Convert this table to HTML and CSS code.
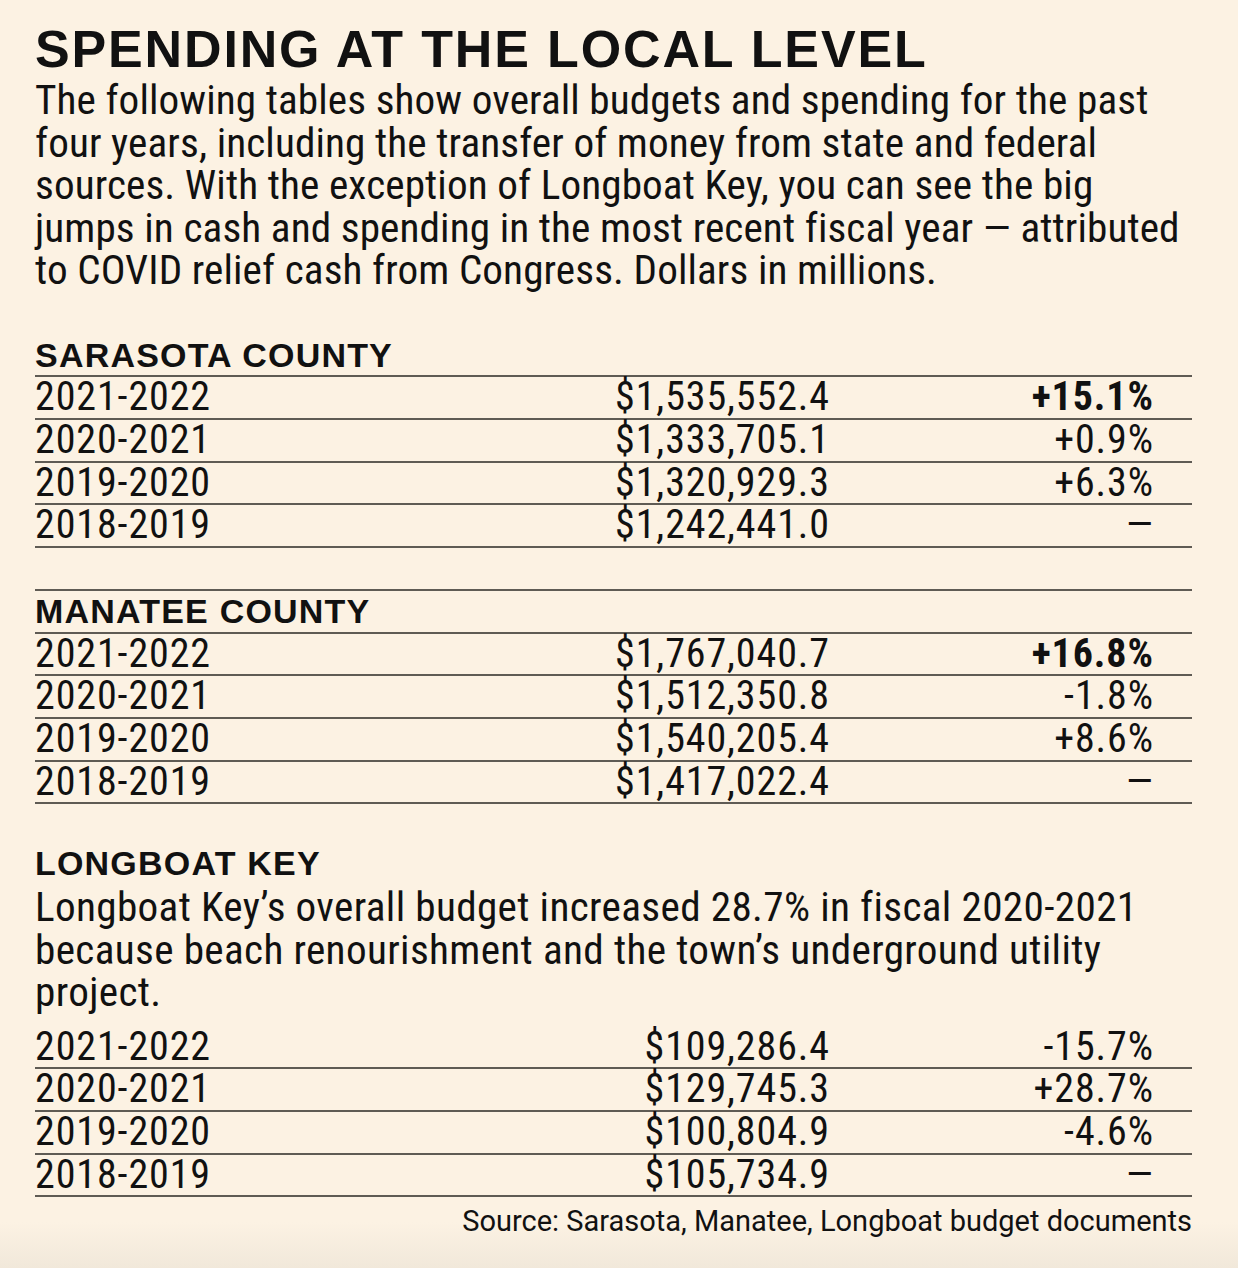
FILE: index.html
```html
<!DOCTYPE html>
<html lang="en">
<head>
<meta charset="utf-8">
<title>Spending at the local level</title>
<link rel="stylesheet" href="styles.css">
</head>
<body>
<main class="page">
  <h1 class="title">SPENDING AT THE LOCAL LEVEL</h1>
  <p class="intro">The following tables show overall budgets and spending for the past<br>four years, including the transfer of money from state and federal<br>sources. With the exception of Longboat Key, you can see the big<br>jumps in cash and spending in the most recent fiscal year — attributed<br>to COVID relief cash from Congress. Dollars in millions.</p>

  <section class="block block-first">
    <h2 class="sec-head ruled">SARASOTA COUNTY</h2>
    <div class="row"><span>2021-2022</span><span class="num">$1,535,552.4</span><span class="pct strong">+15.1%</span></div>
    <div class="row"><span>2020-2021</span><span class="num">$1,333,705.1</span><span class="pct">+0.9%</span></div>
    <div class="row"><span>2019-2020</span><span class="num">$1,320,929.3</span><span class="pct">+6.3%</span></div>
    <div class="row"><span>2018-2019</span><span class="num">$1,242,441.0</span><span class="pct">—</span></div>
  </section>

  <section class="block block-topline">
    <h2 class="sec-head ruled">MANATEE COUNTY</h2>
    <div class="row"><span>2021-2022</span><span class="num">$1,767,040.7</span><span class="pct strong">+16.8%</span></div>
    <div class="row"><span>2020-2021</span><span class="num">$1,512,350.8</span><span class="pct">-1.8%</span></div>
    <div class="row"><span>2019-2020</span><span class="num">$1,540,205.4</span><span class="pct">+8.6%</span></div>
    <div class="row"><span>2018-2019</span><span class="num">$1,417,022.4</span><span class="pct">—</span></div>
  </section>

  <section class="block block-plain">
    <h2 class="sec-head plain">LONGBOAT KEY</h2>
    <p class="note">Longboat Key’s overall budget increased 28.7% in fiscal 2020-2021<br>because beach renourishment and the town’s underground utility<br>project.</p>
    <div class="rows-after-note">
      <div class="row"><span>2021-2022</span><span class="num">$109,286.4</span><span class="pct">-15.7%</span></div>
      <div class="row"><span>2020-2021</span><span class="num">$129,745.3</span><span class="pct">+28.7%</span></div>
      <div class="row"><span>2019-2020</span><span class="num">$100,804.9</span><span class="pct">-4.6%</span></div>
      <div class="row"><span>2018-2019</span><span class="num">$105,734.9</span><span class="pct">—</span></div>
    </div>
  </section>

  <p class="source">Source: Sarasota, Manatee, Longboat budget documents</p>
</main>
</body>
</html>
```
FILE: styles.css
```css
html, body {
  margin: 0;
  padding: 0;
}

body {
  width: 1238px;
  min-height: 1268px;
  background: linear-gradient(to bottom, #fcf2e3 0, #fcf2e3 1222px, #f1e8da 1268px);
  color: #111;
  font-family: "Roboto Condensed", "DejaVu Sans Condensed", "Liberation Sans", sans-serif;
}

.page {
  padding: 24px 46px 0 35px;
  width: 1157px;
}

.title {
  margin: 0;
  font-family: "Liberation Sans", Arial, sans-serif;
  font-weight: 700;
  font-size: 52px;
  line-height: 50px;
  letter-spacing: 1.85px;
  white-space: nowrap;
}

.intro {
  margin: 5px 0 0;
  font-size: 41.2px;
  line-height: 42.5px;
  letter-spacing: 0.1px;
  white-space: nowrap;
}

.block-first {
  margin-top: 43px;
}

.block-topline {
  margin-top: 41px;
  border-top: 2px solid #5f5b54;
}

.block-plain {
  margin-top: 41px;
}

.sec-head {
  margin: 0;
  font-family: "Liberation Sans", Arial, sans-serif;
  font-weight: 700;
  font-size: 34px;
  line-height: 40.67px;
  letter-spacing: 1.2px;
  white-space: nowrap;
}

.sec-head.ruled {
  border-bottom: 2px solid #5f5b54;
}

.sec-head.plain {
  line-height: 37px;
  margin-bottom: 4px;
}

.row {
  display: grid;
  grid-template-columns: 400px 394px 324px 1fr;
  font-size: 40px;
  line-height: 40.67px;
  letter-spacing: 0.9px;
  border-bottom: 2px solid #5f5b54;
  white-space: nowrap;
}

.num,
.pct {
  text-align: right;
  margin-right: -0.9px;
}

.strong {
  font-weight: 700;
}

.note {
  margin: 0;
  font-size: 41.2px;
  line-height: 42.5px;
  letter-spacing: 0.35px;
  white-space: nowrap;
}

.rows-after-note {
  margin-top: 13px;
}

.source {
  margin: 6px 0 0;
  text-align: right;
  font-family: "Roboto", "Liberation Sans", sans-serif;
  font-size: 29px;
  line-height: 36px;
  white-space: nowrap;
}
```
